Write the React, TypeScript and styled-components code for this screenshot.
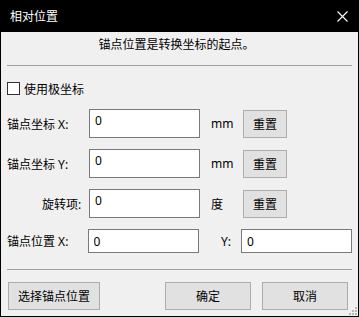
import React from 'react';
import styled, { createGlobalStyle } from 'styled-components';

const GlobalStyle = createGlobalStyle`
  html, body {
    margin: 0;
    padding: 0;
    background: #f0f0f0;
  }
  * {
    box-sizing: border-box;
  }
`;

const Window = styled.div`
  position: relative;
  width: 359px;
  height: 317px;
  border: 1px solid #000;
  border-top: none;
  background: #f0f0f0;
  font-family: "Noto Sans", "Noto Sans CJK SC", sans-serif;
  font-size: 12px;
  color: #000;
  display: flex;
  flex-direction: column;
`;

const TitleBar = styled.div`
  height: 32px;
  background: #000;
  color: #fff;
  display: flex;
  align-items: center;
  justify-content: space-between;
  padding: 0 9px 0 9px;
  font-size: 12px;
`;

const CloseButton = styled.div`
  width: 30px;
  height: 32px;
  margin-right: -9px;
  display: flex;
  align-items: center;
  justify-content: center;
  padding-right: 2px;
`;

const Body = styled.div`
  flex: 1;
  padding: 0 6px;
  display: flex;
  flex-direction: column;
`;

const Hint = styled.div`
  height: 26px;
  line-height: 26px;
  text-align: center;
  padding-right: 6px;
`;

const Separator = styled.div<{ $top: number }>`
  height: 1px;
  background: #a0a0a0;
  margin-top: ${p => p.$top}px;
`;

const CheckRow = styled.label`
  display: flex;
  align-items: center;
  gap: 4px;
  margin-top: 16px;
  height: 13px;
`;

const Box = styled.span`
  width: 13px;
  height: 13px;
  border: 1px solid #333;
  background: #fff;
`;

const Row = styled.div<{ $top: number; $h: number }>`
  display: flex;
  align-items: center;
  height: ${p => p.$h}px;
  margin-top: ${p => p.$top}px;
`;

const Label = styled.div<{ $indent?: number }>`
  width: 82px;
  padding-left: ${p => p.$indent ?? 0}px;
  white-space: nowrap;
`;

const Field = styled.input<{ $shift?: boolean }>`
  width: 111px;
  height: 100%;
  border: 1px solid #7a7a7a;
  background: #fff;
  font: inherit;
  color: #000;
  padding: 0 5px ${p => (p.$shift ? 6 : 0)}px 5px;
  outline: none;
`;

const Unit = styled.div`
  width: 43px;
  padding-left: 11px;
`;

const Side = styled.div`
  width: 43px;
  text-align: right;
  padding-right: 10px;
`;

const Button = styled.button<{ $w: number }>`
  width: ${p => p.$w}px;
  height: 28px;
  border: 1px solid #adadad;
  background: #e1e1e1;
  font: inherit;
  color: #000;
  padding: 0;
`;

const Footer = styled.div`
  display: flex;
  align-items: center;
  margin-top: 12px;
  padding: 0 4px 0 1px;
  gap: 11px;
`;

const Spacer = styled.div`
  flex: 1;
`;

const Grip = styled.svg`
  position: absolute;
  right: 1px;
  bottom: 1px;
`;

function CoordRow(props: { label: string; unit: string; top: number; indent?: number }) {
  return (
    <Row $top={props.top} $h={29}>
      <Label $indent={props.indent}>{props.label}</Label>
      <Field $shift readOnly value="0" />
      <Unit>{props.unit}</Unit>
      <Button $w={44}>重置</Button>
    </Row>
  );
}

export default function App() {
  return (
    <>
      <GlobalStyle />
      <Window>
        <TitleBar>
          <span>相对位置</span>
          <CloseButton>
            <svg width="11" height="11" viewBox="0 0 11 11">
              <path d="M0.5 0.5 L10.5 10.5 M10.5 0.5 L0.5 10.5" stroke="#fff" strokeWidth="1.1" />
            </svg>
          </CloseButton>
        </TitleBar>
        <Body>
          <Hint>锚点位置是转换坐标的起点。</Hint>
          <Separator $top={7} />
          <CheckRow>
            <Box />
            <span>使用极坐标</span>
          </CheckRow>
          <CoordRow label="锚点坐标 X:" unit="mm" top={14} />
          <CoordRow label="锚点坐标 Y:" unit="mm" top={11} />
          <CoordRow label="旋转项:" unit="度" top={11} indent={35} />
          <Row $top={11} $h={24}>
            <Label>锚点位置 X:</Label>
            <Field readOnly value="0" />
            <Side>Y:</Side>
            <Field readOnly value="0" />
          </Row>
          <Separator $top={16} />
          <Footer>
            <Button $w={92}>选择锚点位置</Button>
            <Spacer />
            <Button $w={86}>确定</Button>
            <Button $w={86}>取消</Button>
          </Footer>
        </Body>
        <Grip width="8" height="8" viewBox="0 0 8 8">
          <rect x="6" y="0" width="2" height="2" fill="#b8b8b8" />
          <rect x="3" y="3" width="2" height="2" fill="#b8b8b8" />
          <rect x="6" y="3" width="2" height="2" fill="#b8b8b8" />
          <rect x="0" y="6" width="2" height="2" fill="#b8b8b8" />
          <rect x="3" y="6" width="2" height="2" fill="#b8b8b8" />
          <rect x="6" y="6" width="2" height="2" fill="#b8b8b8" />
        </Grip>
      </Window>
    </>
  );
}
